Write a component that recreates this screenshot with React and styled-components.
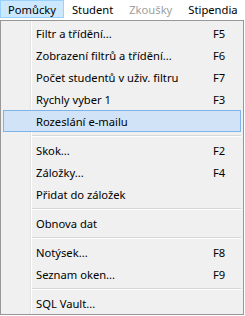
import React from "react";
import styled, { createGlobalStyle } from "styled-components";

const Global = createGlobalStyle`
  html, body {
    margin: 0;
    padding: 0;
    background: #ffffff;
  }
  body {
    font-family: "Noto Sans", "Open Sans", sans-serif;
    font-size: 11.2px;
    color: #000;
  }
`;

const Wrap = styled.div`
  width: 245px;
  height: 316px;
  overflow: hidden;
  background: #fff;
`;

const MenuBar = styled.div`
  display: flex;
  height: 20px;
  background: #fff;
`;

const BarItem = styled.div`
  height: 18px;
  padding: 0 7px;
  display: flex;
  align-items: center;
  box-sizing: border-box;
  border: 1px solid ${p => (p.open ? "#99d1ff" : "transparent")};
  background: ${p => (p.open ? "#cce8ff" : "transparent")};
  color: ${p => (p.disabled ? "#a0a0a0" : "#000")};
  white-space: nowrap;
`;

const Drop = styled.div`
  width: 244px;
  height: 295px;
  box-sizing: border-box;
  border: 1px solid #979797;
  background: #f0f0f0;
  padding: 1px 1px 0 1px;
  position: relative;
  display: flex;
  flex-direction: column;
`;

// svislá čára za sloupcem ikon
const IconRule = styled.div`
  position: absolute;
  top: 0;
  bottom: 0;
  left: 29px;
  width: 1px;
  background: #e2e3e3;
  border-right: 1px solid #fff;
`;

const Item = styled.div`
  position: relative;
  height: 22px;
  margin: 0 1px;
  box-sizing: border-box;
  display: flex;
  align-items: center;
  border: 1px solid ${p => (p.active ? "#7eb4ea" : "transparent")};
  background: ${p => (p.active ? "#d1e3f6" : "transparent")};
  white-space: nowrap;
`;

const Label = styled.span`
  padding-left: 32px;
  flex: 1;
`;

const Key = styled.span`
  width: 27px;
  flex: none;
`;

const Sep = styled.div`
  height: 7px;
  display: flex;
  align-items: center;
  padding-left: 30px;
  padding-right: 1px;
  &::after {
    content: "";
    flex: 1;
    height: 1px;
    background: #d7d7d7;
    border-bottom: 1px solid #fff;
  }
`;

const groups = [
  [
    ["Filtr a třídění...", "F5"],
    ["Zobrazení filtrů a třídění...", "F6"],
    ["Počet studentů v uživ. filtru", "F7"],
    ["Rychly vyber 1", "F3"],
    ["Rozeslání e-mailu", "", true]
  ],
  [
    ["Skok...", "F2"],
    ["Záložky...", "F4"],
    ["Přidat do záložek", ""]
  ],
  [["Obnova dat", ""]],
  [
    ["Notýsek...", "F8"],
    ["Seznam oken...", "F9"]
  ],
  [["SQL Vault...", ""]]
];

export default () => {
  return (
    <Wrap>
      <Global />
      <MenuBar>
        <BarItem open>Pomůcky</BarItem>
        <BarItem>Student</BarItem>
        <BarItem disabled>Zkoušky</BarItem>
        <BarItem>Stipendia</BarItem>
      </MenuBar>
      <Drop>
        <IconRule />
        {groups.map((g, gi) => (
          <React.Fragment key={gi}>
            {gi > 0 && <Sep />}
            {g.map(([label, key, active]) => (
              <Item key={label} active={active}>
                <Label>{label}</Label>
                <Key>{key}</Key>
              </Item>
            ))}
          </React.Fragment>
        ))}
      </Drop>
    </Wrap>
  );
};
